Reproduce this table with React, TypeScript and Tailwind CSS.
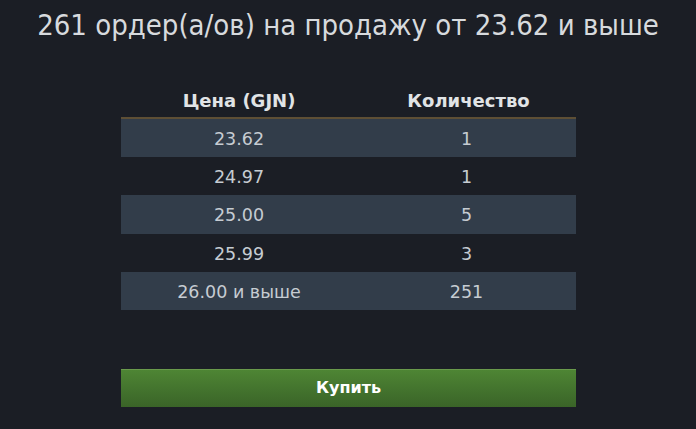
import React from "react";

type Order = { price: string; qty: string };

const orders: Order[] = [
  { price: "23.62", qty: "1" },
  { price: "24.97", qty: "1" },
  { price: "25.00", qty: "5" },
  { price: "25.99", qty: "3" },
  { price: "26.00 и выше", qty: "251" },
];

const App: React.FC = () => {
  return (
    <div
      className="w-[696px] h-[429px] bg-[#1b1e25] text-[#c6ccd2] flex flex-col items-center overflow-hidden"
      style={{ fontFamily: "Verdana, 'DejaVu Sans', sans-serif" }}
    >
      <h1 className="mt-[8px] text-[29px] leading-[34px] text-[#d7dadd] font-['DejaVu_Sans_Condensed','DejaVu_Sans',sans-serif]">
        261 ордер(а/ов) на продажу от 23.62 и выше
      </h1>

      <div className="mt-[42px] w-[456px] pl-[1px]">
        <div className="grid grid-cols-[236px_1fr] h-[35px] items-center font-bold text-[18px] text-[#e1e4e6] border-b-2 border-[#5e4f35]">
          <div className="text-center">Цена (GJN)</div>
          <div className="text-center pl-[4px]">Количество</div>
        </div>
        {orders.map((o, i) => (
          <div
            key={o.price}
            className={
              "grid grid-cols-[236px_1fr] h-[38.2px] items-center text-[17.5px] pt-[2px] " +
              (i % 2 === 0 ? "bg-[#323d4a]" : "")
            }
          >
            <div className="text-center">{o.price}</div>
            <div className="text-center">{o.qty}</div>
          </div>
        ))}
      </div>

      <button className="mt-[59px] ml-[1px] w-[455px] h-[38px] bg-gradient-to-b from-[#4e8534] to-[#3a6428] border-t border-[#6a9a4c] text-white text-[16px] font-bold">
        Купить
      </button>
    </div>
  );
};

export default App;
